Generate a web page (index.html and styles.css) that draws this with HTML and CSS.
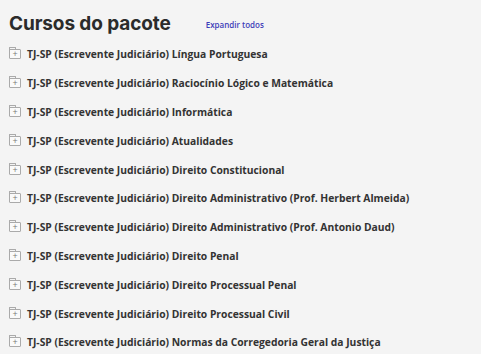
FILE: index.html
```html
<!DOCTYPE html>
<html lang="pt-BR">
  <head>
    <meta charset="UTF-8" />
    <meta name="viewport" content="width=device-width, initial-scale=1.0" />
    <title>Cursos do pacote</title>
    <link rel="stylesheet" href="styles.css">
  </head>
  <body>
    <div class="pacote">
      <div class="pacote-head">
        <h2>Cursos do pacote</h2>
        <a class="expandir" href="#">Expandir todos</a>
      </div>
      <ul class="cursos">
        <li><span class="pasta"></span>TJ-SP (Escrevente Judiciário) Língua Portuguesa</li>
        <li><span class="pasta"></span>TJ-SP (Escrevente Judiciário) Raciocínio Lógico e Matemática</li>
        <li><span class="pasta"></span>TJ-SP (Escrevente Judiciário) Informática</li>
        <li><span class="pasta"></span>TJ-SP (Escrevente Judiciário) Atualidades</li>
        <li><span class="pasta"></span>TJ-SP (Escrevente Judiciário) Direito Constitucional</li>
        <li><span class="pasta"></span>TJ-SP (Escrevente Judiciário) Direito Administrativo (Prof. Herbert Almeida)</li>
        <li><span class="pasta"></span>TJ-SP (Escrevente Judiciário) Direito Administrativo (Prof. Antonio Daud)</li>
        <li><span class="pasta"></span>TJ-SP (Escrevente Judiciário) Direito Penal</li>
        <li><span class="pasta"></span>TJ-SP (Escrevente Judiciário) Direito Processual Penal</li>
        <li><span class="pasta"></span>TJ-SP (Escrevente Judiciário) Direito Processual Civil</li>
        <li><span class="pasta"></span>TJ-SP (Escrevente Judiciário) Normas da Corregedoria Geral da Justiça</li>
      </ul>
    </div>
  </body>
</html>
```

FILE: styles.css
```css
* {
  margin: 0;
  padding: 0;
  box-sizing: border-box;
}
body {
  background: #fff;
  font-family: "Open Sans", sans-serif;
  color: #333;
}

.pacote {
  background: #f4f4f4;
  height: 354px;
  padding: 8px 9px 0;
}

.pacote-head {
  display: flex;
  align-items: center;
  gap: 35px;
  height: 30px;
}

.pacote-head h2 {
  font-family: "Inter", sans-serif;
  font-size: 19px;
  font-weight: 700;
  color: #2b2b2b;
  letter-spacing: -0.1px;
}

.expandir {
  font-size: 8px;
  font-weight: 600;
  color: #3d3db8;
  text-decoration: none;
  margin-top: 2px;
}

.cursos {
  list-style: none;
  margin-top: 2px;
}

.cursos li {
  display: flex;
  align-items: center;
  gap: 6px;
  height: 28.8px;
  font-size: 10.3px;
  font-weight: 700;
  color: #333;
}

.pasta {
  width: 12px;
  height: 10px;
  position: relative;
  border: 1px solid #aaa;
  border-radius: 1px;
  background: #fafafa;
}

/* lingueta da pasta */
.pasta::after {
  content: "";
  position: absolute;
  left: -1px;
  top: -3px;
  width: 5px;
  height: 2px;
  border: 1px solid #aaa;
  border-bottom: none;
  border-radius: 1px 1px 0 0;
}

.pasta::before {
  content: "+";
  position: absolute;
  left: 0;
  right: 0;
  top: -3px;
  text-align: center;
  font-size: 9px;
  font-weight: 400;
  color: #777;
}
```
